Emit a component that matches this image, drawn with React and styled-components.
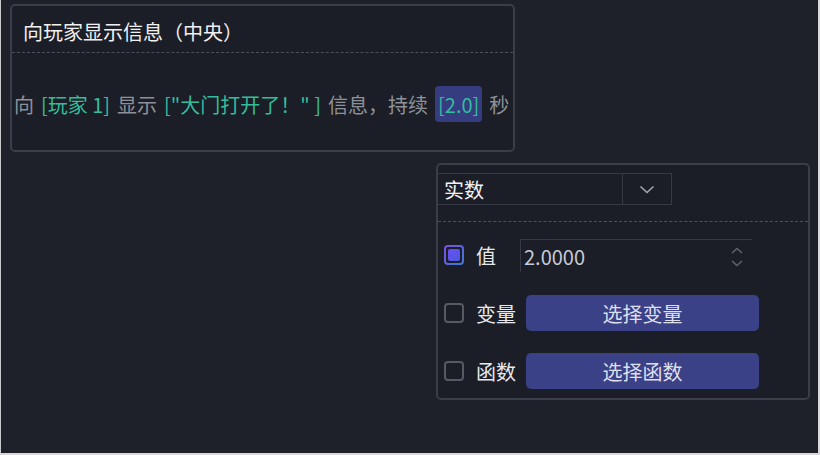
import React from 'react';
import styled, { createGlobalStyle } from 'styled-components';

const GlobalStyle = createGlobalStyle`
  html, body {
    margin: 0;
    padding: 0;
    background: #1e212a;
  }
  body {
    font-family: "Noto Sans CJK SC", "Noto Sans", sans-serif;
  }
`;

const Canvas = styled.div`
  width: 820px;
  height: 455px;
  box-sizing: border-box;
  background: #1e212a;
  border-left: 1px solid #c9cacc;
  border-right: 2px solid #d8d8d8;
  border-bottom: 2px solid #d8d8d8;
  padding-top: 4px;
  overflow: hidden;
`;

const Node = styled.div`
  box-sizing: border-box;
  width: ${p => p.w}px;
  height: ${p => p.h}px;
  margin-left: ${p => p.x}px;
  margin-top: ${p => p.top}px;
  background: #1b1e26;
  border: 2px solid #3a3e48;
  border-radius: 5px;
  overflow: hidden;
`;

const Header = styled.div`
  height: 47px;
  display: flex;
  align-items: center;
  padding: 4px 0 0 11px;
  color: #f0f0f2;
  font-size: 20px;
  border-bottom: 1px dashed #4c505b;
  box-sizing: border-box;
`;

const Sentence = styled.div`
  height: 100px;
  display: flex;
  align-items: center;
  white-space: nowrap;
  font-size: 20px;
  color: #8d9199;
  padding: 2px 0 0 2px;
  box-sizing: border-box;
  gap: 7px;
`;

const Word = styled.span`
  color: ${p => (p.slot ? '#34bd9c' : '#8d9199')};
`;

const Chip = styled.span`
  display: inline-flex;
  align-items: center;
  height: 36px;
  background: #363c80;
  color: #34bd9c;
  border-radius: 4px;
  padding: 0 3px;
`;

const SelectBox = styled.div`
  display: flex;
  height: 32px;
  width: 234px;
  margin-top: 8px;
  border: 1px solid #363a44;
  border-left: none;
  box-sizing: border-box;
`;

const SelectValue = styled.div`
  flex: 1;
  display: flex;
  align-items: center;
  padding-left: 6px;
  color: #f2f2f4;
  font-size: 20px;
  border-right: 1px solid #363a44;
`;

const SelectArrow = styled.div`
  width: 48px;
  display: flex;
  align-items: center;
  justify-content: center;
`;

const Divider = styled.div`
  margin-top: 16px;
  border-top: 1px dashed #4c505b;
`;

const Rows = styled.div`
  display: flex;
  flex-direction: column;
  padding: 15px 0 0 6px;
  gap: 22px;
`;

const Row = styled.div`
  display: flex;
  align-items: center;
  height: 36px;
`;

const Check = styled.div`
  width: 20px;
  height: 20px;
  box-sizing: border-box;
  border-radius: 4px;
  border: 2px solid #555a64;
  display: flex;
  align-items: center;
  justify-content: center;
  ${p =>
    p.on &&
    `
    border: none;
    background: linear-gradient(135deg, #7b4fe0, #3d7ad8);
    padding: 2px;
  `}
`;

const CheckFill = styled.div`
  width: 100%;
  height: 100%;
  border-radius: 2px;
  background: #1b1e26;
  display: flex;
  align-items: center;
  justify-content: center;
  &::after {
    content: '';
    width: 12px;
    height: 12px;
    border-radius: 2px;
    background: linear-gradient(135deg, #6a4ff0, #4a5ae0);
  }
`;

const Label = styled.div`
  width: ${p => p.w}px;
  flex-shrink: 0;
  margin-left: 12px;
  color: #e8e8ec;
  font-size: 20px;
`;

const NumberField = styled.div`
  width: 232px;
  height: 33px;
  box-sizing: border-box;
  border-top: 1px solid #363a44;
  border-left: 1px solid #363a44;
  display: flex;
  align-items: center;
  justify-content: space-between;
  padding: 2px 9px 0 3px;
  color: #c6cad8;
  font-size: 20px;
`;

const Action = styled.button`
  width: 233px;
  height: 36px;
  border: none;
  border-radius: 5px;
  background: #3a4187;
  color: #dedfec;
  font-family: inherit;
  font-size: 20px;
  padding: 0;
`;

const Chevron = ({ up }) => (
  <svg width="12" height="7" viewBox="0 0 12 7">
    <path
      d={up ? 'M1 6 L6 1.5 L11 6' : 'M1 1 L6 5.5 L11 1'}
      fill="none"
      stroke="#5d626c"
      strokeWidth="1.6"
    />
  </svg>
);

const Spinner = styled.div`
  display: flex;
  flex-direction: column;
  gap: 6px;
`;

export default function App() {
  return (
    <Canvas>
      <GlobalStyle />
      <Node x={9} top={0} w={505} h={148}>
        <Header>向玩家显示信息（中央）</Header>
        <Sentence>
          <Word>向</Word>
          <Word slot>[玩家 1]</Word>
          <Word>显示</Word>
          <Word slot>["大门打开了！" ]</Word>
          <Word>信息，持续</Word>
          <Chip>[2.0]</Chip>
          <Word>秒</Word>
        </Sentence>
      </Node>

      <Node x={435} top={11} w={374} h={237}>
        <SelectBox>
          <SelectValue>实数</SelectValue>
          <SelectArrow>
            <svg width="16" height="9" viewBox="0 0 16 9">
              <path d="M1.5 1.5 L8 7.5 L14.5 1.5" fill="none" stroke="#a3a7b0" strokeWidth="1.6" />
            </svg>
          </SelectArrow>
        </SelectBox>
        <Divider />
        <Rows>
          <Row>
            <Check on>
              <CheckFill />
            </Check>
            <Label w={44}>值</Label>
            <NumberField>
              <span>2.0000</span>
              <Spinner>
                <Chevron up />
                <Chevron />
              </Spinner>
            </NumberField>
          </Row>
          <Row>
            <Check />
            <Label w={50}>变量</Label>
            <Action>选择变量</Action>
          </Row>
          <Row>
            <Check />
            <Label w={50}>函数</Label>
            <Action>选择函数</Action>
          </Row>
        </Rows>
      </Node>
    </Canvas>
  );
}
